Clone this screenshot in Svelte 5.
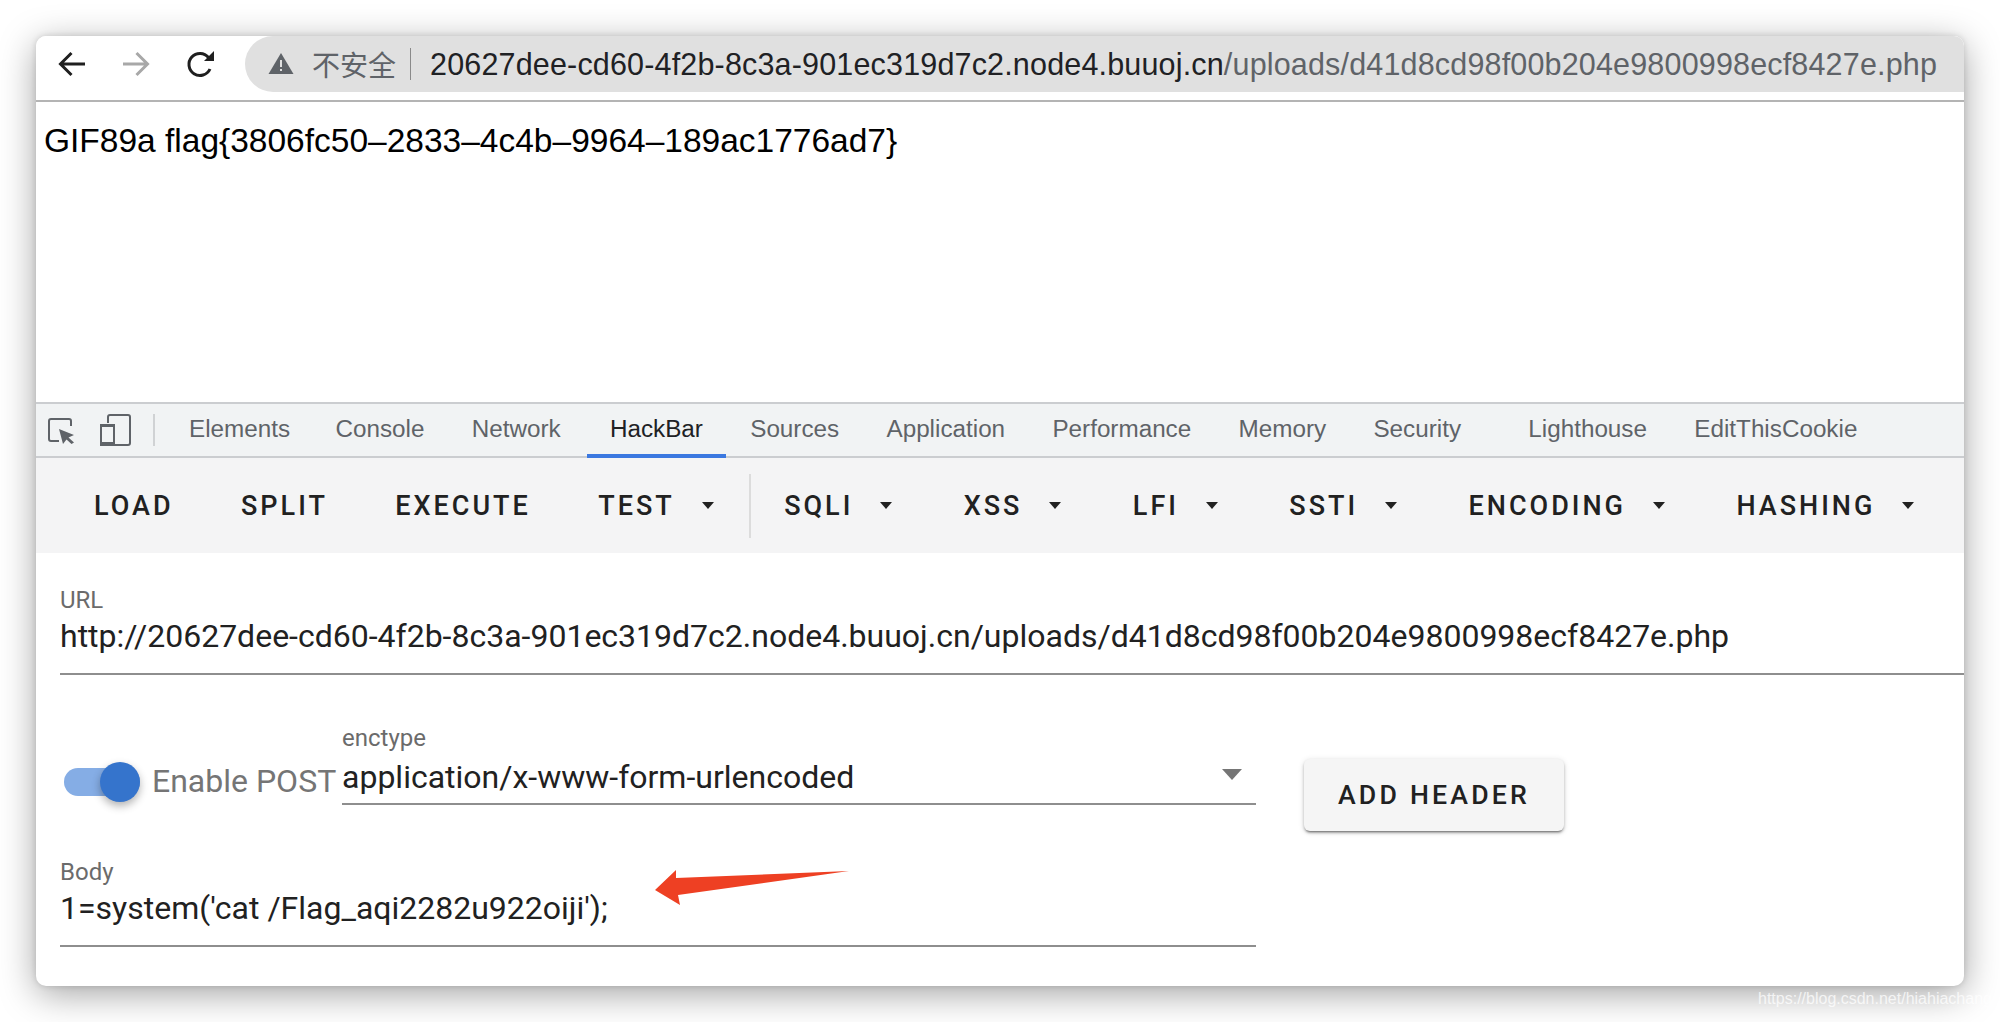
<script>
  const tabs = [
    ['Elements'], ['Console'], ['Network'], ['HackBar', true], ['Sources'],
    ['Application'], ['Performance'], ['Memory'], ['Security'], ['Lighthouse'], ['EditThisCookie']
  ];
  const plain = ['LOAD', 'SPLIT', 'EXECUTE'];
  const menus = ['SQLI', 'XSS', 'LFI', 'SSTI', 'ENCODING', 'HASHING'];
</script>

<div class="page">
  <div class="window">
    <header class="chrome">
      <div class="navs">
        <svg class="nav" viewBox="0 0 32 32" width="32" height="32"><path d="M29 16H5M15.500 5 4.500 16l11 11" fill="none" stroke="#1f1f1f" stroke-width="3"/></svg>
        <svg class="nav" viewBox="0 0 32 32" width="32" height="32"><path d="M3 16h24M16.500 5l11 11-11 11" fill="none" stroke="#a8a8a8" stroke-width="3"/></svg>
        <svg class="nav" viewBox="0 0 32 32" width="32" height="32"><path d="M24.500 9.500A11 11 0 1 0 26 21" fill="none" stroke="#1f1f1f" stroke-width="3"/><path d="M30 3v10H20z" fill="#1f1f1f"/></svg>
      </div>
      <div class="omni">
        <svg class="warn" viewBox="0 0 26 24" width="26" height="24"><path d="M13 1 25.500 22H.5z" fill="#5f6368"/><path d="M12 8h2v7h-2zM12 17h2v2h-2z" fill="#e0e0e0"/></svg>
        <span class="insecure">不安全</span>
        <span class="omni-sep"></span>
        <span class="addr">20627dee-cd60-4f2b-8c3a-901ec319d7c2.node4.buuoj.cn<span class="path">/uploads/d41d8cd98f00b204e9800998ecf8427e.php</span></span>
      </div>
    </header>

    <main class="content">GIF89a flag&#123;3806fc50–2833–4c4b–9964–189ac1776ad7&#125;</main>

    <nav class="tabs">
      <svg class="tool" viewBox="0 0 30 32" width="30" height="32"><path d="M13 27H5a2 2 0 0 1-2-2V7a2 2 0 0 1 2-2h18a2 2 0 0 1 2 2v5" fill="none" stroke="#5f6368" stroke-width="2"/><path d="M13 15l15 6-5.500 2.500 5.500 5-2.500 1.500-5-4.500-3.500 4.500z" fill="#5f6368"/></svg>
      <svg class="tool device" viewBox="0 0 32 32" width="32" height="32"><path d="M9 9V3a2 2 0 0 1 2-2h18a2 2 0 0 1 2 2v26a2 2 0 0 1-2 2H16" fill="none" stroke="#5f6368" stroke-width="2"/><rect x="2" y="11" width="13" height="20" rx="2" fill="none" stroke="#5f6368" stroke-width="2"/><path d="M1 28h15v4H1zM1 10h15v3H1z" fill="#5f6368"/></svg>
      <span class="tool-sep"></span>
      <div class="tablist">
        {#each tabs as [label, active]}
          <span class="tab" class:active>{label}</span>
        {/each}
      </div>
    </nav>

    <section class="hackbar">
      {#each plain as label}
        <span class="hb">{label}</span>
      {/each}
      <span class="hb">TEST<i class="caret"></i></span>
      <span class="hb-sep"></span>
      {#each menus as label}
        <span class="hb">{label}<i class="caret"></i></span>
      {/each}
    </section>

    <section class="form">
      <div class="field url">
        <span class="label">URL</span>
        <div class="value">http://20627dee-cd60-4f2b-8c3a-901ec319d7c2.node4.buuoj.cn/uploads/d41d8cd98f00b204e9800998ecf8427e.php</div>
      </div>

      <div class="options">
        <div class="switch"><span class="track"></span><span class="thumb"></span></div>
        <span class="post">Enable POST</span>
        <div class="field enctype">
          <span class="label">enctype</span>
          <div class="value">application/x-www-form-urlencoded<i class="arrow"></i></div>
        </div>
        <span class="add">ADD HEADER</span>
      </div>

      <div class="field body">
        <span class="label">Body</span>
        <div class="value">1=system('cat /Flag_aqi2282u922oiji');</div>
        <svg class="annot" viewBox="0 0 200 40" width="200" height="40"><path d="M1 20 22 0 22 8 195 1 24 25 26 35z" fill="#ee4023"/></svg>
      </div>
    </section>
  </div>
  <span class="mark">https://blog.csdn.net/hiahiachang</span>
</div>

<style>
  :global(body) { margin: 0; background: #fff; }
  .page { position: relative; width: 2000px; height: 1022px; padding: 36px; box-sizing: border-box; overflow: hidden; }
  .window {
    width: 1928px; height: 950px; background: #fff; border-radius: 10px; overflow: hidden;
    box-shadow: 0 8px 36px rgba(0,0,0,.36), 0 0 6px rgba(0,0,0,.14);
    display: flex; flex-direction: column; font-family: "Liberation Sans", sans-serif;
  }
  .chrome { height: 56px; flex: none; background: #fff; border-bottom: 2px solid #b4b4b4; display: flex; padding-bottom: 8px; }
  .navs { width: 209px; display: flex; gap: 32px; padding-left: 20px; box-sizing: border-box; align-items: center; }
  .nav { flex: none; }
  .omni { flex: 1; height: 56px; background: #e0e0e0; border-radius: 28px 0 0 28px; display: flex; align-items: center; padding-left: 23px; font-size: 30.500px; }
  .warn { flex: none; }
  .insecure { font-family: "Noto Sans CJK SC", sans-serif; color: #5f6368; font-size: 28px; margin-left: 18px; }
  .omni-sep { width: 1px; height: 32px; background: #8a8a8a; margin: 0 19px 0 14px; }
  .addr { color: #202124; white-space: nowrap; letter-spacing: .17px; }
  .path { color: #5f6368; }
  .content { height: 300px; flex: none; padding: 21px 8px 0; box-sizing: border-box; font-size: 33.500px; line-height: 36px; color: #000; white-space: nowrap; }
  .tabs { height: 52px; flex: none; background: #f1f3f4; border-top: 2px solid #cbcdd0; border-bottom: 2px solid #cbcdd0; display: flex; align-items: center; padding-left: 10px; }
  .tool { flex: none; }
  .device { margin-left: 23px; }
  .tool-sep { width: 2px; height: 32px; background: #d0d2d4; margin-left: 22px; flex: none; }
  .tablist { display: flex; height: 100%; padding-left: 34px; gap: 47.300px; }
  .tab { font-size: 24.250px; color: #5f6368; line-height: 50px; display: block; position: relative; white-space: nowrap; }
  .tab:nth-child(1) { margin-right: -2px; }
  .tab:nth-child(3) { margin-right: 2px; }
  .tab:nth-child(9) { margin-right: 20px; }
  .tab.active { color: #202124; }
  .tab.active::after { content: ""; position: absolute; left: -23px; right: -23px; bottom: -2px; height: 4px; background: #3b78e0; }
  .hackbar { height: 95px; flex: none; background: #f4f4f5; display: flex; align-items: center; padding-left: 58px; font-family: Roboto, sans-serif; font-size: 27px; font-weight: 500; letter-spacing: 3px; color: #212121; white-space: nowrap; }
  .hb { display: flex; align-items: center; margin-right: 67.400px; }
  .hb-sep { flex: none; width: 2px; height: 64px; background: #dcdcdc; margin: 0 33.600px 0 -36.600px; }
  .caret { display: block; width: 0; height: 0; border-left: 6.500px solid transparent; border-right: 6.500px solid transparent; border-top: 7px solid #212121; margin-left: 27px; margin-right: 4px; }
  .form { flex: 1; position: relative; font-family: Roboto, sans-serif; }
  .field { position: relative; }
  .label { display: block; color: #6b6b6b; font-size: 24px; line-height: 26px; }
  .value { color: #212121; font-size: 32px; line-height: 40px; border-bottom: 2px solid #8e8e8e; white-space: nowrap; position: relative; }
  .url { margin: 34px 0 0 24px; }
  .url .value { padding: 3px 0 17px; overflow: hidden; }
  .options { display: flex; align-items: flex-start; margin: 0 0 0 28px; height: 184px; position: relative; }
  .switch { position: relative; width: 76px; height: 40px; margin-top: 87px; flex: none; }
  .track { position: absolute; left: 0; right: 0; top: 6px; height: 28px; border-radius: 14px; background: #85ade5; }
  .thumb { position: absolute; right: 0; top: 0; width: 40px; height: 40px; border-radius: 50%; background: #3574cc; box-shadow: 0 4px 8px rgba(0,0,0,.3); }
  .post { color: #757575; font-size: 32px; line-height: 40px; margin: 86px 0 0 12px; white-space: nowrap; width: 190px; flex: none; }
  .enctype { width: 914px; margin-top: 50px; flex: none; }
  .enctype .value { padding: 6px 0 6px; }
  .arrow { position: absolute; right: 14px; top: 18px; border-left: 10px solid transparent; border-right: 10px solid transparent; border-top: 11px solid #757575; }
  .add {
    width: 260px; height: 72px; margin: 84px 0 0 48px; flex: none; border-radius: 6px; background: #f5f5f5; display: flex; align-items: center; justify-content: center;
    font-size: 26.700px; font-weight: 500; letter-spacing: 3.200px; color: #212121; white-space: nowrap;
    box-shadow: 0 3px 2px -2px rgba(0,0,0,.35), 0 2px 3px rgba(0,0,0,.25), 0 1px 6px rgba(0,0,0,.12);
  }
  .body { width: 1196px; margin-left: 24px; }
  .body .value { padding: 3px 0 17px; }
  .annot { position: absolute; left: 594px; top: 11px; }
  .mark { position: absolute; left: 1758px; top: 990px; color: rgba(255,255,255,.75); font: 16px "Liberation Sans", sans-serif; white-space: nowrap; }
</style>
